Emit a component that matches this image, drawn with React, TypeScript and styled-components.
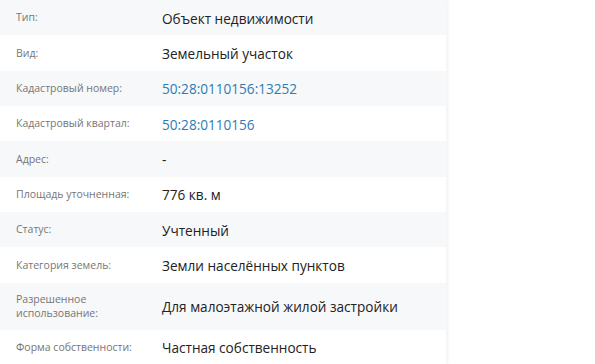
import React from 'react';
import styled, { createGlobalStyle } from 'styled-components';

type Item = {
  label: string;
  value: string;
  link?: boolean;
  tall?: boolean;
};

const GlobalStyle = createGlobalStyle`
  html, body {
    margin: 0;
    padding: 0;
    background: #ffffff;
  }
  body {
    font-family: 'Open Sans', 'Noto Sans', sans-serif;
  }
`;

const Page = styled.div`
  display: flex;
  width: 595px;
  height: 364px;
  overflow: hidden;
`;

const Panel = styled.div`
  width: 446px;
  display: flex;
  flex-direction: column;
  background: #ffffff;
  box-shadow: 2px 0 3px rgba(0, 0, 0, 0.05);
`;

const Row = styled.div<{ $shaded: boolean; $tall: boolean }>`
  display: grid;
  grid-template-columns: 146px 1fr;
  align-items: center;
  flex: none;
  height: ${(p) => (p.$tall ? '47px' : '35.33px')};
  padding-left: 16px;
  background: ${(p) => (p.$shaded ? '#f7f8fa' : '#ffffff')};
`;

const Label = styled.div`
  font-size: 10.5px;
  line-height: 13.5px;
  color: #767676;
  padding-top: 1px;
`;

const Value = styled.div<{ $link: boolean }>`
  font-size: 13.6px;
  line-height: 18px;
  padding-top: 2px;
  color: ${(p) => (p.$link ? '#2d7cb3' : '#222222')};
`;

const items: Item[] = [
  { label: 'Тип:', value: 'Объект недвижимости' },
  { label: 'Вид:', value: 'Земельный участок' },
  { label: 'Кадастровый номер:', value: '50:28:0110156:13252', link: true },
  { label: 'Кадастровый квартал:', value: '50:28:0110156', link: true },
  { label: 'Адрес:', value: '-' },
  { label: 'Площадь уточненная:', value: '776 кв. м' },
  { label: 'Статус:', value: 'Учтенный' },
  { label: 'Категория земель:', value: 'Земли населённых пунктов' },
  { label: 'Разрешенное использование:', value: 'Для малоэтажной жилой застройки', tall: true },
  { label: 'Форма собственности:', value: 'Частная собственность' },
];

const App: React.FC = (): JSX.Element => (
  <Page>
    <GlobalStyle />
    <Panel>
      {items.map((item, index) => (
        <Row key={`row-${index}`} $shaded={index % 2 === 0} $tall={!!item.tall}>
          <Label>
            {item.tall ? (
              <>
                Разрешенное
                <br />
                использование:
              </>
            ) : (
              item.label
            )}
          </Label>
          <Value $link={!!item.link}>{item.value}</Value>
        </Row>
      ))}
    </Panel>
  </Page>
);

export default App;
